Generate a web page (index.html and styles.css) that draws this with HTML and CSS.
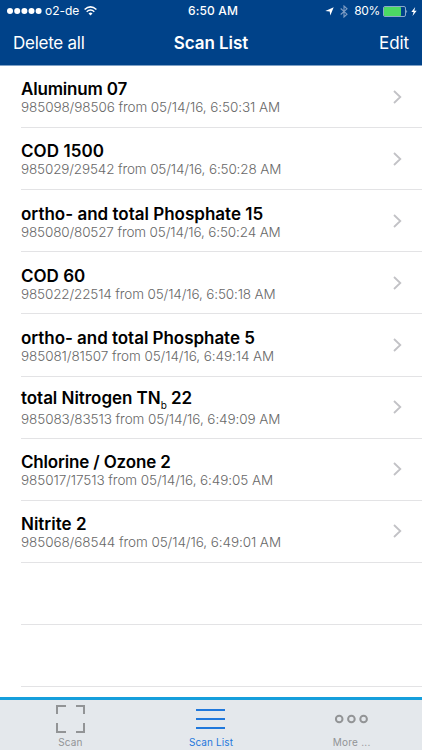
FILE: index.html
```html
<!DOCTYPE html>
<html lang="en">
<head>
<meta charset="utf-8">
<title>Scan List</title>
<link rel="stylesheet" href="styles.css">
</head>
<body>
<header class="header">
  <div class="status">
    <div class="carrier">
      <svg width="35" height="8" viewBox="0 0 35 8" fill="#fff"><circle cx="3" cy="4" r="3"/><circle cx="10.2" cy="4" r="3"/><circle cx="17.4" cy="4" r="3"/><circle cx="24.5" cy="4" r="3"/><circle cx="31.6" cy="4" r="3"/></svg>
      <span class="network">o2-de</span>
      <svg class="wifi" width="13" height="10" viewBox="0 0 13 10" fill="none" stroke="#fff" stroke-width="1.5"><path d="M.6 3.5Q6.5-1.7 12.4 3.5M2.7 5.7Q6.5 2.4 10.3 5.7"/><path d="M4.5 7.4Q6.5 5.8 8.5 7.4L6.5 9.4Z" fill="#fff" stroke="none"/></svg>
    </div>
    <div class="clock">6:50 AM</div>
    <div class="indicators">
      <svg width="9" height="9" viewBox="0 0 9 9" fill="#fff"><path d="M8.7.3 5.3 8.5 4.7 4.4.3 4Z"/></svg>
      <svg class="bluetooth" width="8" height="13" viewBox="0 0 8 13" fill="none" stroke="#7e9dc3" stroke-width="1.1"><path d="M.7 3.5 7 9.2 4 12V1L7 3.8.7 9.5"/></svg>
      <span class="percent">80%</span>
      <svg class="battery" width="25" height="11" viewBox="0 0 25 11"><rect x=".5" y=".5" width="22" height="10" rx="1.5" fill="none" stroke="#8ba9ca"/><rect x="1" y="1" width="17" height="9" rx=".7" fill="#4cd964"/><path d="M23.4 3.7Q25 5.5 23.4 7.3Z" fill="#b7cbe0"/></svg>
      <svg class="bolt" width="6" height="9" viewBox="0 0 6 9" fill="#fff"><path d="M4.2 0 .3 5H2.6L1.5 9 5.7 3.7H3.3Z"/></svg>
    </div>
  </div>
  <nav class="nav"><span class="delete">Delete all</span><h1>Scan List</h1><span class="edit">Edit</span></nav>
</header>
<main class="list">
  <div class="row upper aluminum"><div><h2>Aluminum 07</h2><p>985098/98506 from 05/14/16, 6:50:31 AM</p></div><svg class="chevron" viewBox="0 0 9 14"><path d="m1 1 6.3 6L1 13"/></svg></div>
  <div class="row upper dense cod"><div><h2>COD 1500</h2><p>985029/29542 from 05/14/16, 6:50:28 AM</p></div><svg class="chevron" viewBox="0 0 9 14"><path d="m1 1 6.3 6L1 13"/></svg></div>
  <div class="row middle dense"><div><h2>ortho- and total Phosphate 15</h2><p>985080/80527 from 05/14/16, 6:50:24 AM</p></div><svg class="chevron" viewBox="0 0 9 14"><path d="m1 1 6.3 6L1 13"/></svg></div>
  <div class="row middle dense"><div><h2>COD 60</h2><p>985022/22514 from 05/14/16, 6:50:18 AM</p></div><svg class="chevron" viewBox="0 0 9 14"><path d="m1 1 6.3 6L1 13"/></svg></div>
  <div class="row middle tall"><div><h2>ortho- and total Phosphate 5</h2><p>985081/81507 from 05/14/16, 6:49:14 AM</p></div><svg class="chevron" viewBox="0 0 9 14"><path d="m1 1 6.3 6L1 13"/></svg></div>
  <div class="row lower formula"><div><h2>total Nitrogen TN<sub>b</sub> 22</h2><p>985083/83513 from 05/14/16, 6:49:09 AM</p></div><svg class="chevron" viewBox="0 0 9 14"><path d="m1 1 6.3 6L1 13"/></svg></div>
  <div class="row lower chlorine"><div><h2>Chlorine / Ozone 2</h2><p>985017/17513 from 05/14/16, 6:49:05 AM</p></div><svg class="chevron" viewBox="0 0 9 14"><path d="m1 1 6.3 6L1 13"/></svg></div>
  <div class="row lower"><div><h2>Nitrite 2</h2><p>985068/68544 from 05/14/16, 6:49:01 AM</p></div><svg class="chevron" viewBox="0 0 9 14"><path d="m1 1 6.3 6L1 13"/></svg></div>
  <div class="row"></div>
  <div class="row"></div>
</main>
<footer class="tabs">
  <div class="tab"><svg width="30" height="30" viewBox="0 0 30 30" fill="none" stroke="#929496" stroke-width="2"><path d="M2 10V2H11M21 2H29V10M29 19V28H21M11 28H2V19"/></svg><span>Scan</span></div>
  <div class="tab active"><svg width="30" height="30" viewBox="0 0 30 30" stroke="#1f78dc" stroke-width="2"><path d="M0 6H29M0 15H29M0 24H29"/></svg><span>Scan List</span></div>
  <div class="tab"><svg width="34" height="30" viewBox="0 0 34 30" fill="none" stroke="#929496" stroke-width="2"><circle cx="4.2" cy="15" r="3.3"/><circle cx="16.4" cy="15" r="3.3"/><circle cx="28.6" cy="15" r="3.3"/></svg><span class="more">More ...</span></div>
</footer>
</body>
</html>
```
FILE: styles.css
```css
* { box-sizing: border-box; }
body { margin: 0; width: 422px; height: 750px; overflow: hidden; display: flex; flex-direction: column; background: #fff; font-family: Inter, "Liberation Sans", sans-serif; }
h1, h2, p { margin: 0; white-space: nowrap; }
svg { display: block; flex-shrink: 0; }
.header { height: 66px; flex-shrink: 0; background: #004289; color: #fff; border-bottom: 1px solid #7fa1c6; }
.status { height: 22px; display: grid; grid-template-columns: 1fr auto 1fr; align-items: center; padding: 0 5px 0 7px; font-size: 12px; line-height: 22px; }
.carrier, .indicators { display: flex; align-items: center; }
.network { margin-left: 3px; letter-spacing: -.05px; }
.wifi { margin-left: 5px; }
.clock { font-weight: 500; letter-spacing: .15px; padding-left: 2px; }
.indicators { justify-content: flex-end; }
.bluetooth { margin-left: 6px; }
.percent { margin-left: 6px; letter-spacing: -.35px; }
.battery { margin-left: 3px; }
.bolt { margin-left: 3px; }
.nav { height: 43px; display: grid; grid-template-columns: 1fr auto 1fr; align-items: center; padding: 0 13px; font-size: 17px; line-height: 43px; }
.delete { letter-spacing: -.25px; }
h1 { font-size: 17px; font-weight: 600; letter-spacing: -.05px; }
.edit { text-align: right; letter-spacing: -.1px; }
.list { flex: 1; padding-left: 21px; overflow: hidden; }
.row { height: 62px; border-bottom: 1px solid #e3e3e5; display: flex; justify-content: space-between; padding: 13px 20px 0 0; }
.tall { height: 63px; }
h2 { font-size: 17px; line-height: 21px; font-weight: 600; color: #000; }
p { font-size: 13.5px; line-height: 16px; color: #686868; font-weight: 300; letter-spacing: -.08px; }
.dense p { letter-spacing: -.14px; }
.upper p, .lower p { margin-top: -1px; }
.middle { padding-top: 14px; }
.middle p { margin-top: -1px; }
.aluminum h2 { letter-spacing: -.18px; }
.cod h2 { letter-spacing: .06px; }
.chlorine h2 { letter-spacing: -.17px; }
.tall h2, .formula h2 { letter-spacing: -.04px; }
.formula { padding-top: 11px; }
.formula p { margin-top: 2px; }
sub { font-size: 10px; font-weight: 400; line-height: 0; vertical-align: -5px; }
.chevron { width: 9px; height: 14px; margin-top: 11px; fill: none; stroke: #c2c2c6; stroke-width: 1.8; }
.middle .chevron, .lower .chevron { margin-top: 10px; }
.formula .chevron { margin-top: 12px; }
.tabs { height: 53px; flex-shrink: 0; border-top: 3px solid #169fdc; background: #e4e8ec; display: grid; grid-template-columns: repeat(3, 1fr); color: #929496; }
.tab { display: flex; flex-direction: column; align-items: center; padding-top: 4px; }
.tab span { font-size: 10px; line-height: 14px; margin-top: 1px; letter-spacing: .1px; }
.tab .more { letter-spacing: .22px; }
.active { color: #1f78dc; }
```
